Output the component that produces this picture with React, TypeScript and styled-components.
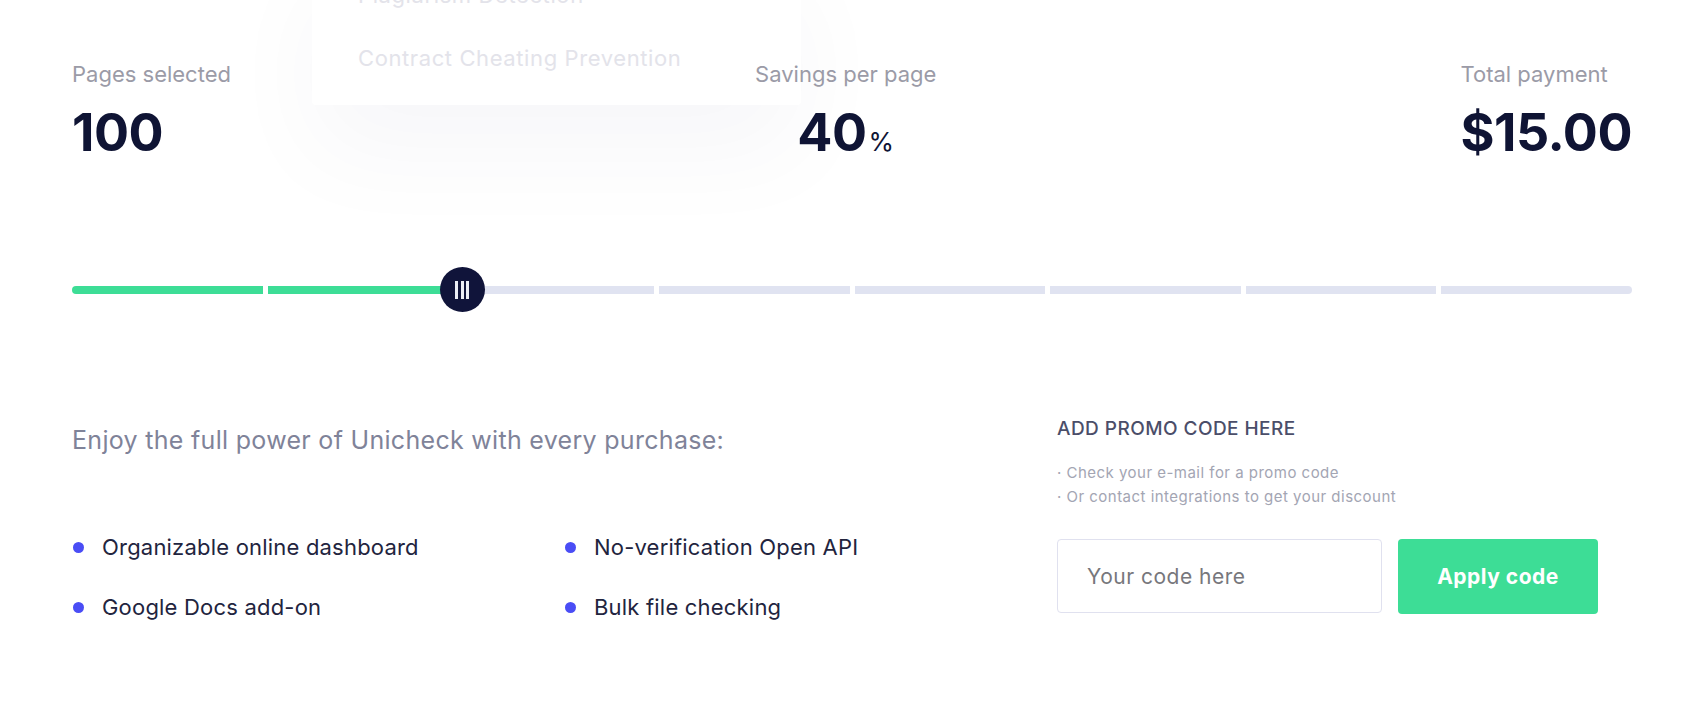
import React from "react";
import styled, { createGlobalStyle } from "styled-components";

const Global = createGlobalStyle`
  html, body { margin: 0; padding: 0; background: #ffffff; }
  body { font-family: Inter, "Noto Sans", sans-serif; overflow: hidden; }
  * { box-sizing: border-box; }
`;

const Page = styled.div`
  position: relative;
  width: 1698px;
  height: 723px;
  padding: 61px 66px 0 72px;
  overflow: hidden;
`;

const Menu = styled.div`
  position: absolute;
  left: 312px;
  top: -58px;
  width: 489px;
  height: 163px;
  background: #ffffff;
  border-radius: 4px;
  box-shadow: 0 50px 100px rgba(40, 40, 90, 0.035);
  padding: 40px 0 0 46px;
  display: flex;
  flex-direction: column;
  gap: 36px;
  z-index: 0;
`;

const MenuItem = styled.div`
  font-size: 22px;
  line-height: 27px;
  letter-spacing: 0.6px;
  color: #e3e3ea;
  white-space: nowrap;
`;

const Content = styled.div`
  position: relative;
  z-index: 1;
`;

const Stats = styled.div`
  display: flex;
  justify-content: space-between;
  align-items: flex-start;
`;

const Stat = styled.div<{ $center?: boolean }>`
  display: flex;
  flex-direction: column;
  align-items: ${(p) => (p.$center ? "center" : "flex-start")};
  gap: 19px;
`;

const Label = styled.div`
  font-size: 22px;
  line-height: 27px;
  color: #9b9ba7;
  white-space: nowrap;
`;

const Value = styled.div`
  font-size: 52px;
  line-height: 52px;
  font-weight: 700;
  color: #0f1434;
  letter-spacing: -0.5px;
  white-space: nowrap;
`;

const Unit = styled.span`
  font-size: 26px;
  line-height: 0;
  font-weight: 400;
  letter-spacing: 0;
  margin-left: 2px;
`;

const Slider = styled.div`
  position: relative;
  height: 45px;
  margin-top: 108px;
  display: flex;
  align-items: center;
`;

const Track = styled.div`
  flex: 1;
  display: flex;
  gap: 5px;
`;

const Segment = styled.div<{ $on: boolean }>`
  flex: 1;
  height: 8px;
  background: ${(p) => (p.$on ? "#3ddd96" : "#e0e3f1")};
  &:first-child { border-radius: 4px 0 0 4px; }
  &:last-child { border-radius: 0 4px 4px 0; }
`;

const Thumb = styled.div`
  position: absolute;
  top: 0;
  width: 45px;
  height: 45px;
  margin-left: -22.5px;
  border-radius: 50%;
  background: #10143a;
  display: flex;
  align-items: center;
  justify-content: center;
  gap: 2.5px;
`;

const Grip = styled.span`
  width: 3px;
  height: 18px;
  background: #eceef6;
`;

const Bottom = styled.div`
  display: flex;
  margin-top: 106px;
`;

const Features = styled.div`
  flex: 1;
  padding-top: 7px;
`;

const Heading = styled.div`
  font-size: 25px;
  line-height: 30px;
  letter-spacing: 0.3px;
  color: #7f8399;
  white-space: nowrap;
`;

const FeatureGrid = styled.div`
  margin-top: 77px;
  display: grid;
  grid-template-columns: 492px auto;
  row-gap: 30px;
`;

const Feature = styled.div`
  display: flex;
  align-items: center;
  gap: 18px;
  font-size: 22px;
  line-height: 30px;
  letter-spacing: 0.2px;
  color: #22243e;
  white-space: nowrap;
  &::before {
    content: "";
    width: 11px;
    height: 11px;
    margin-left: 1px;
    border-radius: 50%;
    background: #4a4df5;
    flex: none;
  }
`;

const Promo = styled.div`
  width: 575px;
`;

const PromoTitle = styled.div`
  font-size: 19px;
  line-height: 22px;
  font-weight: 500;
  letter-spacing: 0.45px;
  color: #4b4e69;
  white-space: nowrap;
`;

const Hints = styled.div`
  margin-top: 21px;
  font-size: 15px;
  line-height: 24px;
  color: #a3a5b3;
  letter-spacing: 0.48px;
  white-space: nowrap;
`;

const Form = styled.div`
  margin-top: 30px;
  display: flex;
  gap: 16px;
`;

const Input = styled.input`
  width: 325px;
  height: 74px;
  border: 1px solid #e0e1ef;
  border-radius: 4px;
  padding: 0 0 0 29px;
  font-family: Inter, "Noto Sans", sans-serif;
  font-size: 21px;
  letter-spacing: 0.5px;
  color: #333;
  outline: none;
  &::placeholder { color: #77777c; }
`;

const Button = styled.button`
  width: 200px;
  height: 75px;
  border: none;
  border-radius: 4px;
  background: #3ddd96;
  color: #ffffff;
  font-family: Inter, "Noto Sans", sans-serif;
  font-size: 21px;
  letter-spacing: 0.5px;
  font-weight: 700;
  cursor: pointer;
`;

const segments = [true, true, false, false, false, false, false, false];

export default function App() {
  return (
    <>
      <Global />
      <Page>
        <Menu>
          <MenuItem>Plagiarism Detection</MenuItem>
          <MenuItem>Contract Cheating Prevention</MenuItem>
        </Menu>
        <Content>
          <Stats>
            <Stat>
              <Label>Pages selected</Label>
              <Value>100</Value>
            </Stat>
            <Stat $center>
              <Label>Savings per page</Label>
              <Value>
                40<Unit>%</Unit>
              </Value>
            </Stat>
            <Stat>
              <Label>Total payment</Label>
              <Value>$15.00</Value>
            </Stat>
          </Stats>
          <Slider>
            <Track>
              {segments.map((on, i) => (
                <Segment key={i} $on={on} />
              ))}
            </Track>
            <Thumb style={{ left: "25%" }}>
              <Grip />
              <Grip />
              <Grip />
            </Thumb>
          </Slider>
          <Bottom>
            <Features>
              <Heading>Enjoy the full power of Unicheck with every purchase:</Heading>
              <FeatureGrid>
                <Feature>Organizable online dashboard</Feature>
                <Feature>No-verification Open API</Feature>
                <Feature>Google Docs add-on</Feature>
                <Feature>Bulk file checking</Feature>
              </FeatureGrid>
            </Features>
            <Promo>
              <PromoTitle>ADD PROMO CODE HERE</PromoTitle>
              <Hints>
                <div>· Check your e-mail for a promo code</div>
                <div>· Or contact integrations to get your discount</div>
              </Hints>
              <Form>
                <Input placeholder="Your code here" />
                <Button>Apply code</Button>
              </Form>
            </Promo>
          </Bottom>
        </Content>
      </Page>
    </>
  );
}
